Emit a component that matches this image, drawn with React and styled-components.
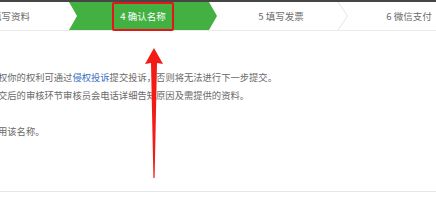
import React from 'react';
import styled, { createGlobalStyle } from 'styled-components';

const GlobalStyle = createGlobalStyle`
	html, body {
		margin: 0;
		padding: 0;
		background: #ffffff;
	}
	body {
		font-family: 'Noto Sans CJK SC', 'Noto Sans', sans-serif;
	}
`;

export const Page = styled.div`
	position: relative;
	width: 436px;
	height: 217px;
	overflow: hidden;
	background: #ffffff;
`;

export const TopStrip = styled.div`
	height: 2px;
	background: #454545;
`;

export const StepBar = styled.div`
	display: flex;
	height: 28px;
	border-bottom: 1px solid #ebebeb;
	background: #ffffff;
`;

export const Step = styled.div`
	position: relative;
	flex: none;
	width: ${(p) => p.$width}px;
	display: flex;
	align-items: center;
	justify-content: ${(p) => p.$justify || 'center'};
	padding-right: ${(p) => p.$padRight || 0}px;
	box-sizing: border-box;
	font-size: 9.5px;
	color: #6b6b6b;
	white-space: nowrap;
`;

export const ActiveStep = styled(Step)`
	color: #ffffff;
	padding-left: 8px;
	padding-right: 8px;

	&::before {
		content: '';
		position: absolute;
		inset: 0;
		background: #42b142;
		clip-path: polygon(
			0 0,
			calc(100% - 8px) 0,
			100% 50%,
			calc(100% - 8px) 100%,
			0 100%,
			8px 50%
		);
	}
`;

export const StepLabel = styled.span`
	position: relative;
`;

export const Highlight = styled.div`
	position: absolute;
	left: 43px;
	top: 0;
	width: 62px;
	height: 29px;
	box-sizing: border-box;
	border: 2px solid #e8141b;
	border-radius: 2px;
`;

export const Divider = styled.svg`
	position: absolute;
	right: -4px;
	top: 0;
	width: 12px;
	height: 28px;
`;

export const Content = styled.div`
	height: 161px;
	box-sizing: border-box;
	padding-top: 37px;
	margin-left: -2px;
	font-size: 9.3px;
	line-height: 18px;
	color: #6a6a6a;
	white-space: nowrap;
	border-bottom: 1px solid #e6e6e6;
`;

export const Line = styled.p`
	margin: 0;
	margin-bottom: ${(p) => (p.$gap ? 18 : 0)}px;
`;

export const Link = styled.a`
	color: #3a6fc4;
	text-decoration: none;
`;

export const Arrow = styled.svg`
	position: absolute;
	left: 144px;
	top: 47px;
	width: 20px;
	height: 132px;
`;

export default function App() {
	return (
		<>
			<GlobalStyle />
			<Page>
				<TopStrip />
				<StepBar>
					<Step $width={69} $justify="flex-end" $padRight={39}>
						填写资料
					</Step>
					<ActiveStep $width={148}>
						<StepLabel>4 确认名称</StepLabel>
						<Highlight />
					</ActiveStep>
					<Step $width={128}>
						5 填写发票
						<Divider viewBox="0 0 12 28">
							<polyline
								points="1,0 10.5,14 1,28"
								fill="none"
								stroke="#e4e4e4"
								strokeWidth="1"
							/>
						</Divider>
					</Step>
					<Step $width={128}>6 微信支付</Step>
				</StepBar>
				<Content>
					<Line>
						权你的权利可通过<Link>侵权投诉</Link>提交投诉，否则将无法进行下一步提交。
					</Line>
					<Line $gap>交后的审核环节审核员会电话详细告知原因及需提供的资料。</Line>
					<Line>用该名称。</Line>
				</Content>
				<Arrow viewBox="0 0 20 132">
					<polygon
						points="10,1 1,17 7,16 9.4,131 10.6,131 13,16 19,17"
						fill="#f21c17"
					/>
				</Arrow>
			</Page>
		</>
	);
}
